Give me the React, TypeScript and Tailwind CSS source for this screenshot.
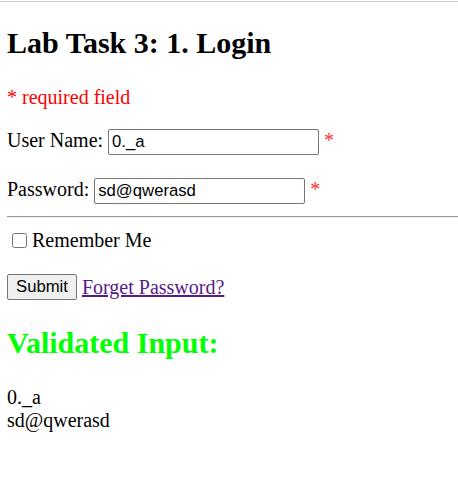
import { useState } from "react";

export default function App() {
  const [userName, setUserName] = useState("0._a");
  const [password, setPassword] = useState("sd@qwerasd");
  const [remember, setRemember] = useState(false);

  const inputCls =
    "ml-[5px] h-[26px] w-[211px] rounded-[2px] border border-[#767676] bg-white px-[3px] font-['Liberation_Sans',Arial,sans-serif] text-[16.7px] text-black outline-none";

  return (
    <div className="min-h-screen bg-white font-['Liberation_Serif','Times_New_Roman',serif] text-[20px] leading-[23px] text-black">
      <div className="pt-px">
        <div className="h-px bg-[#c8c8c8]" />
      </div>

      <div className="pl-[7px]">
        <h2 className="mt-[24px] text-[30px] font-bold leading-[34px]">Lab Task 3: 1. Login</h2>

        <p className="mt-[26px] text-[#ff0000]">* required field</p>

        <form onSubmit={(e) => e.preventDefault()}>
          <div className="mt-[20px] flex items-baseline">
            <label htmlFor="uname">User Name:</label>
            <input
              id="uname"
              type="text"
              value={userName}
              onChange={(e) => setUserName(e.target.value)}
              className={inputCls}
            />
            <span className="ml-[5px] text-[#ff3030]">*</span>
          </div>

          <div className="mt-[23px] flex items-baseline">
            <label htmlFor="pwd">Password:</label>
            <input
              id="pwd"
              type="text"
              value={password}
              onChange={(e) => setPassword(e.target.value)}
              className={inputCls}
            />
            <span className="ml-[5px] text-[#ff3030]">*</span>
          </div>

          <hr className="mt-[12px] border-0 border-t border-b border-t-[#9a9a9a] border-b-[#eeeeee]" />

          <div className="mt-[11px] flex items-center">
            <input
              id="remember"
              type="checkbox"
              checked={remember}
              onChange={(e) => setRemember(e.target.checked)}
              className="ml-[5px] mr-[5px] h-[15px] w-[15px]"
            />
            <label htmlFor="remember">Remember Me</label>
          </div>

          <div className="mt-[22px] flex items-center">
            <button
              type="submit"
              className="h-[26px] rounded-[2px] border border-[#767676] bg-[#efefef] px-[8px] font-['Liberation_Sans',Arial,sans-serif] text-[16.7px] leading-[20px] text-black"
            >
              Submit
            </button>
            <a href="#" className="ml-[5px] text-[#551a8b] underline">
              Forget Password?
            </a>
          </div>
        </form>

        <h2 className="mt-[26px] text-[30px] font-bold leading-[34px] text-[#00ff00]">Validated Input:</h2>

        <div className="mt-[26px]">
          <div>0._a</div>
          <div>sd@qwerasd</div>
        </div>
      </div>
    </div>
  );
}
